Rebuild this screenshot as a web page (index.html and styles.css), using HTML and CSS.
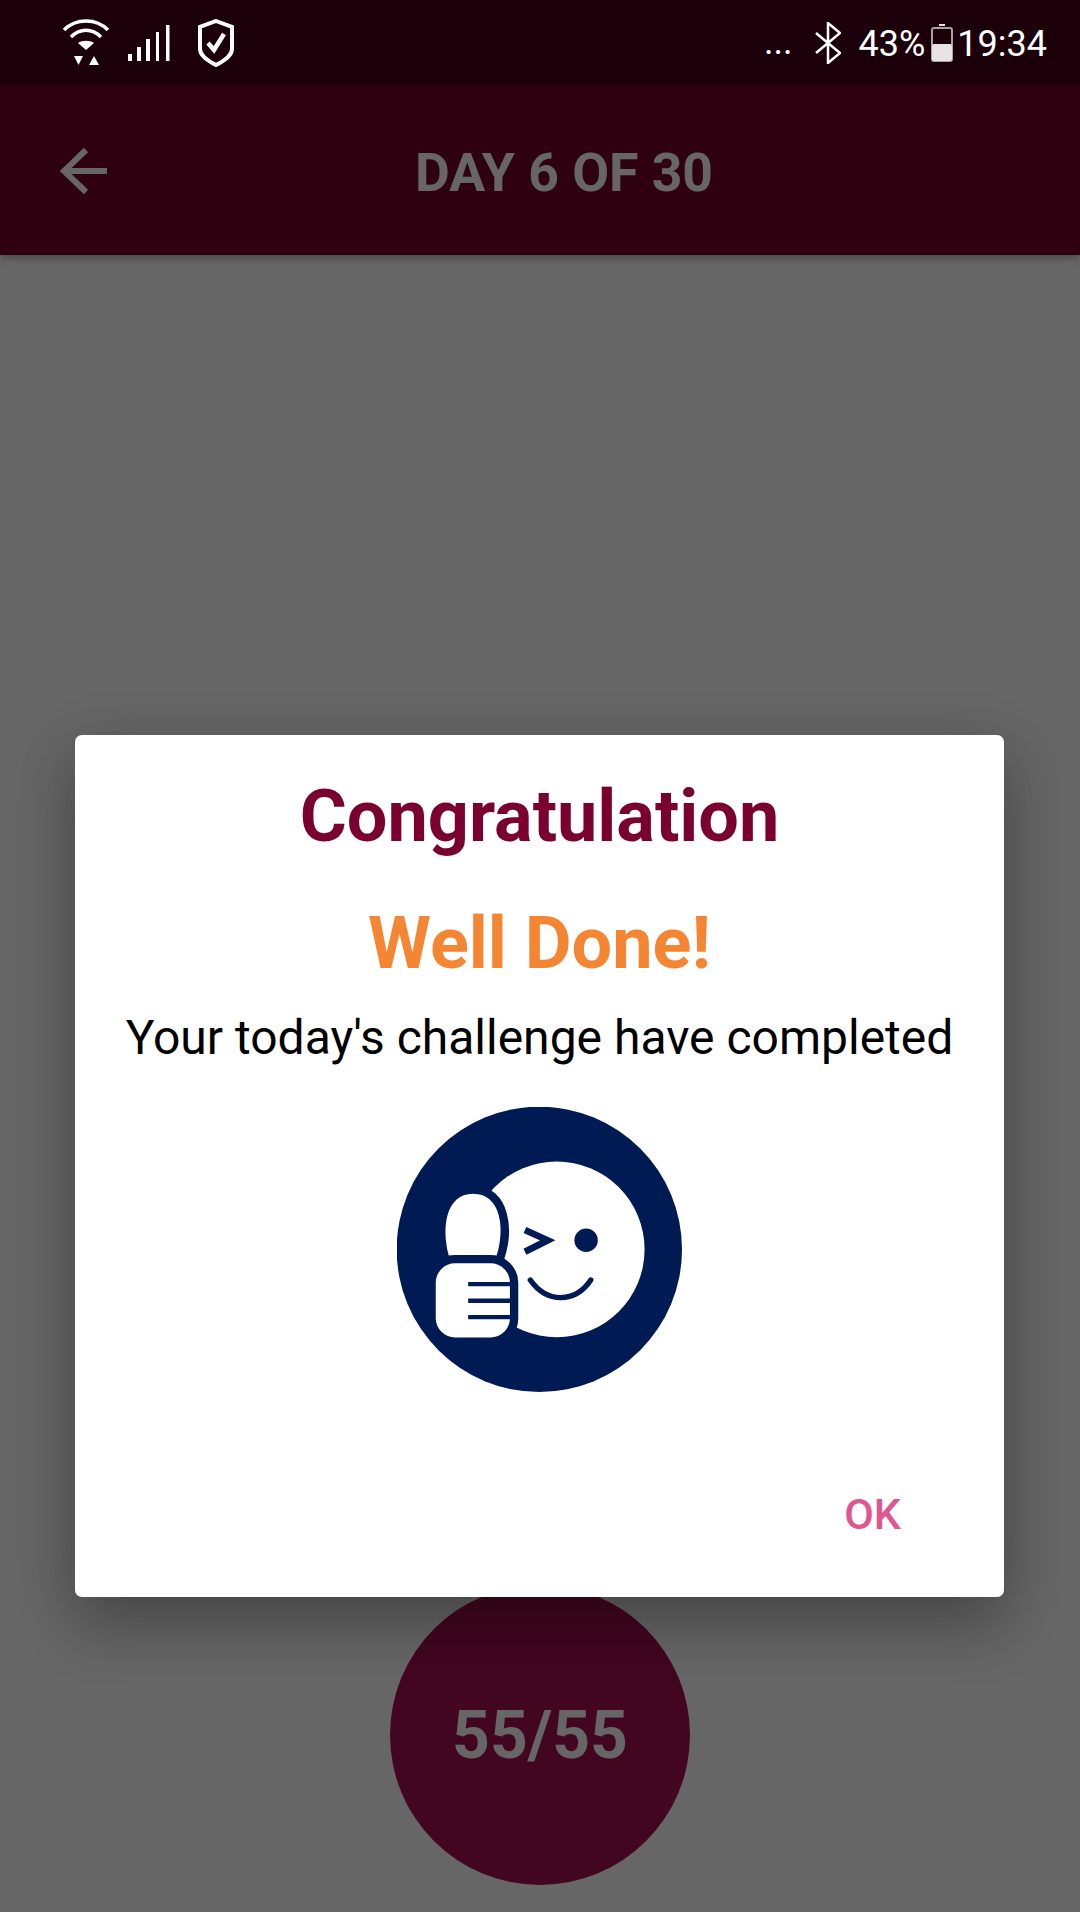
FILE: index.html
```html
<!DOCTYPE html>
<html lang="en">
<head>
    <meta charset="UTF-8">
    <title>Day 6 of 30</title>
    <link rel="stylesheet" href="styles.css">
</head>
<body>
<div id="screen">
    <div id="status_bar">
        <div class="status_left">
            <svg class="icon_wifi" viewBox="0 0 48 48" width="48" height="48">
                <path d="M2 11 C14 -1 34 -1 46 11" class="wifi_arc"/>
                <path d="M9 18 C18 9 30 9 39 18" class="wifi_arc"/>
                <path d="M16 24 C20 21 28 21 32 24 L24 31 Z" class="wifi_fill"/>
                <path d="M12 37 L21 37 L16.500 46 Z" class="wifi_fill"/>
                <path d="M27 46 L37 46 L32 37 Z" class="wifi_fill"/>
            </svg>
            <svg class="icon_signal" viewBox="0 0 42 36" width="42" height="36">
                <rect x="0" y="29" width="4" height="7"/>
                <rect x="9" y="22" width="4" height="14"/>
                <rect x="18" y="14" width="4" height="22"/>
                <rect x="28" y="7" width="3" height="29"/>
                <rect x="38" y="0" width="3.500" height="36"/>
            </svg>
            <svg class="icon_shield" viewBox="0 0 36 48" width="36" height="48">
                <path d="M18 2 L34 8 L34 30 C34 36 26 42 18 46 C10 42 2 36 2 30 L2 8 Z" class="shield_line"/>
                <path d="M10 24 L16 31 L26 15" class="shield_check"/>
            </svg>
        </div>
        <div class="status_right">
            <div class="status_dots">...</div>
            <svg class="icon_bt" viewBox="0 0 26 42" width="26" height="42">
                <path d="M1 11 L25 31 L13 41 L13 1 L25 11 L1 31" class="bt_line"/>
            </svg>
            <div class="status_text status_pct">43%</div>
            <svg class="icon_battery" viewBox="0 0 22 38" width="22" height="38">
                <rect x="8" y="0" width="6" height="2" class="batt_cap"/>
                <rect x="1" y="4" width="20" height="33" rx="2" class="batt_case"/>
                <rect x="1" y="20" width="20" height="17" rx="2" class="batt_level"/>
            </svg>
            <div class="status_text">19:34</div>
        </div>
    </div>

    <div id="app_bar">
        <svg class="icon_back" viewBox="0 0 48 48" width="48" height="48">
            <path d="M47 24 L4 24 M26 3 L4 24 L26 45" class="back_line"/>
        </svg>
        <div class="app_title">DAY 6 OF 30</div>
    </div>

    <div id="main">
        <div class="counter">55/55</div>
    </div>

    <div id="scrim">
        <div id="dialog">
            <div class="dialog_title">Congratulation</div>
            <div class="dialog_sub">Well Done!</div>
            <div class="dialog_text">Your today's challenge have completed</div>
            <svg class="dialog_img" viewBox="52 52 853 853" width="285" height="285">
                <circle cx="478" cy="478" r="427" class="navy"/>
                <circle cx="530" cy="478" r="263" class="white"/>
                <!-- thumb and fist, the thick outline cuts them out of the face -->
                <path d="M207 497 C185 420 195 312 280 312 C365 312 375 420 350 497 Z" class="hand"/>
                <rect x="168" y="520" width="222" height="222" rx="58" class="hand"/>
                <path d="M265 582 H392 M265 632 H392 M265 681 H392" class="hand_line"/>
                <path d="M435 420 L503 451 L435 485" class="wink"/>
                <circle cx="618" cy="451" r="35" class="navy"/>
                <path d="M451 570 C500 640 585 640 632 570" class="smile"/>
            </svg>
            <div class="dialog_actions">
                <div class="dialog_ok">OK</div>
            </div>
        </div>
    </div>
</div>
</body>
</html>
```

FILE: styles.css
```css
*{
    box-sizing: border-box;
}
html,body{
    margin: 0;
    padding: 0;
}
body{
    font-family: Roboto, "Liberation Sans", sans-serif;
    background-color: #fff;
}
#screen{
    position: relative;
    display: flex;
    flex-direction: column;
    width: 1080px;
    height: 1912px;
    overflow: hidden;
}

/* status bar sits above the scrim */
#status_bar{
    position: relative;
    z-index: 2;
    display: flex;
    justify-content: space-between;
    align-items: center;
    height: 86px;
    padding: 0 33px 0 62px;
    background-color: #1b0009;
    color: #fff;
}
.status_left{
    display: flex;
    align-items: center;
    gap: 18px;
}
.status_left svg,
.status_right svg{
    display: block;
}
.status_right{
    display: flex;
    align-items: center;
}
.status_dots{
    font-size: 36px;
    line-height: 1;
    margin-right: 22px;
    transform: translateY(-1px);
}
.status_text{
    font-size: 36px;
    line-height: 1;
    transform: translateY(1px);
}
.status_pct{
    margin: 0 6px 0 18px;
}
.icon_signal{
    fill: #fff;
    margin-right: 10px;
}
.wifi_arc{
    fill: none;
    stroke: #fff;
    stroke-width: 3.500;
}
.wifi_fill{
    fill: #fff;
}
.shield_line{
    fill: none;
    stroke: #fff;
    stroke-width: 4;
}
.shield_check{
    fill: none;
    stroke: #fff;
    stroke-width: 4.500;
}
.bt_line{
    fill: none;
    stroke: #fff;
    stroke-width: 2.500;
}
.batt_cap,
.batt_level{
    fill: #e8e4e6;
}
.batt_case{
    fill: none;
    stroke: #a8a2a5;
    stroke-width: 2;
}
.icon_battery{
    margin-right: 4px;
}

#app_bar{
    position: relative;
    display: flex;
    align-items: center;
    height: 169px;
    padding-left: 60px;
    background-color: #750029;
    color: #fff;
    box-shadow: 0 3px 8px rgba(0,0,0,.3);
}
.icon_back{
    flex-shrink: 0;
    margin-right: 307px;
}
.back_line{
    fill: none;
    stroke: #fff;
    stroke-width: 6;
}
.app_title{
    font-size: 53.500px;
    font-weight: 700;
    transform: translateY(2px);
}

#main{
    flex: 1;
    display: flex;
    flex-direction: column;
    align-items: center;
    justify-content: flex-end;
    padding-bottom: 27px;
}
.counter{
    display: flex;
    align-items: center;
    justify-content: center;
    width: 300px;
    height: 300px;
    border-radius: 50%;
    background-color: #a50f50;
    color: #fff;
    font-size: 66px;
    font-weight: 700;
}

#scrim{
    position: absolute;
    top: 0;
    left: 0;
    width: 100%;
    height: 100%;
    z-index: 1;
    padding: 735px 76px 0 75px;
    background-color: rgba(0,0,0,.6);
}
#dialog{
    display: flex;
    flex-direction: column;
    align-items: center;
    height: 862px;
    padding-top: 42px;
    background-color: #fff;
    border-radius: 7px;
    box-shadow: 0 30px 60px rgba(0,0,0,.22), 0 10px 60px rgba(0,0,0,.14);
}
.dialog_title{
    font-size: 72px;
    font-weight: 700;
    line-height: 80px;
    color: #7a0030;
}
.dialog_sub{
    margin-top: 47px;
    font-size: 72px;
    font-weight: 700;
    line-height: 80px;
    color: #f48533;
}
.dialog_text{
    margin-top: 26px;
    font-size: 48px;
    line-height: 56px;
    color: #000;
}
.dialog_img{
    display: block;
    margin-top: 41px;
    flex-shrink: 0;
}
.navy{
    fill: #001a54;
}
.white{
    fill: #fff;
}
.hand{
    fill: #fff;
    stroke: #001a54;
    stroke-width: 50;
    paint-order: stroke;
}
.hand_line{
    fill: none;
    stroke: #001a54;
    stroke-width: 13;
}
.wink{
    fill: none;
    stroke: #001a54;
    stroke-width: 20;
}
.smile{
    fill: none;
    stroke: #001a54;
    stroke-width: 16;
    stroke-linecap: round;
}
.dialog_actions{
    align-self: stretch;
    display: flex;
    justify-content: flex-end;
    padding: 98px 103px 0 0;
}
.dialog_ok{
    font-size: 43px;
    font-weight: 500;
    line-height: 48px;
    color: #e0578f;
}
```
